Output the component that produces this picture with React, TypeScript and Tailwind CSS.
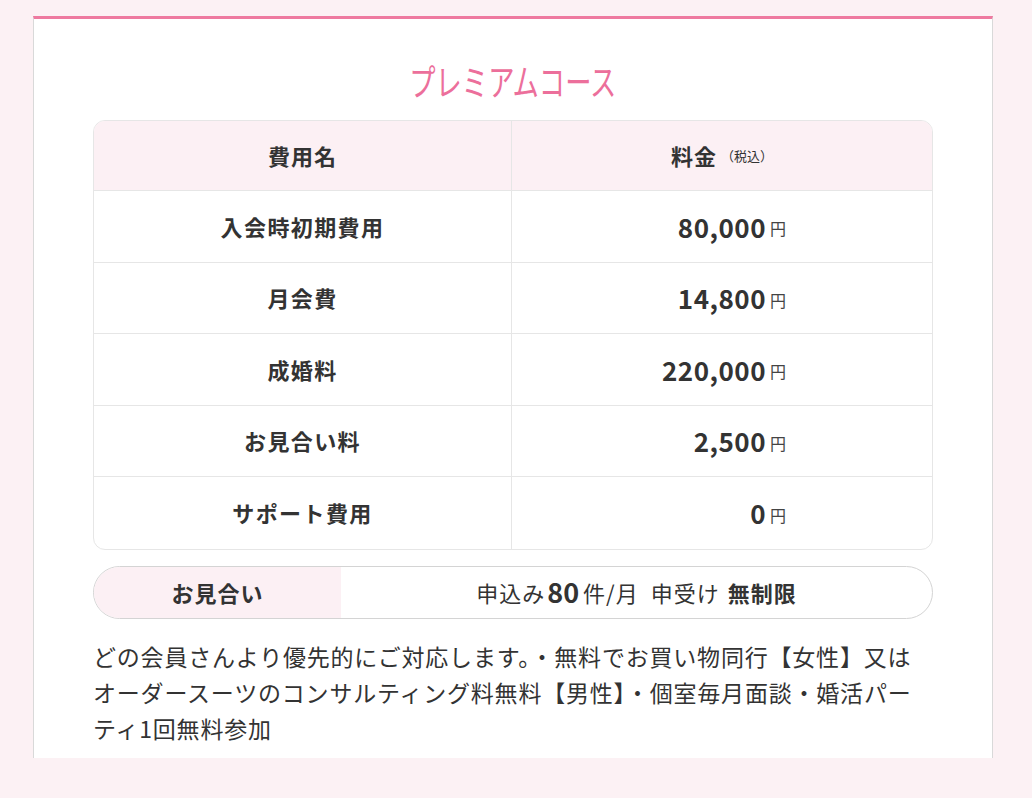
const JP = "font-['Noto_Sans_CJK_JP','Noto_Sans',sans-serif]";

const rows = [
  { name: "入会時初期費用", price: "80,000" },
  { name: "月会費", price: "14,800" },
  { name: "成婚料", price: "220,000" },
  { name: "お見合い料", price: "2,500" },
  { name: "サポート費用", price: "0" },
];

export default function App() {
  return (
    <div className={`min-h-screen bg-[#fcf1f4] pt-4 text-[#333] ${JP}`}>
      <div className="ml-[33px] mr-[39px] border-x border-t-[3px] border-x-[#d9d9d9] border-t-[#ee7aa0] bg-white px-[59px] pt-[41px] pb-3">
        <h2 className="text-center text-[36px] leading-[40px] font-normal text-[#ec6f9b]">
          <span className="inline-block scale-x-[0.73]">プレミアムコース</span>
        </h2>

        <div className="mt-5 overflow-hidden rounded-xl border border-[#e6e6e6]">
          <div className="grid h-[70px] grid-cols-[418px_1fr] bg-[#fcf0f4] border-b border-[#e6e6e6]">
            <div className="flex items-center justify-center border-r border-[#e6e6e6] text-[22px] font-bold tracking-[1px]">
              費用名
            </div>
            <div className="flex items-center justify-center text-[22px] font-bold tracking-[1px]">
              料金<span className="ml-1 text-[13px] font-normal tracking-normal">（税込）</span>
            </div>
          </div>
          {rows.map((r, i) => (
            <div
              key={r.name}
              className={`grid h-[71.5px] grid-cols-[418px_1fr] ${i < rows.length - 1 ? "border-b border-[#e6e6e6]" : ""}`}
            >
              <div className="flex items-center justify-center border-r border-[#e6e6e6] text-[22px] font-bold tracking-[1.4px]">
                {r.name}
              </div>
              <div className="flex items-center justify-end pr-[146px]">
                <span className="text-[26px] font-bold tracking-[0.5px]">{r.price}</span>
                <span className="ml-1 mt-1 text-[16px] text-[#444]">円</span>
              </div>
            </div>
          ))}
        </div>

        <div className="mt-[16px] flex h-[53px] overflow-hidden rounded-full border border-[#d4d4d4]">
          <div className="flex w-[247px] items-center justify-center bg-[#fcf0f4] text-[22px] font-bold tracking-[1px]">
            お見合い
          </div>
          <div className="flex flex-1 items-center justify-center text-[22px] tracking-[1px]">
            申込み<span className="ml-0.5 text-[27px] font-bold tracking-normal">80</span>
            <span className="ml-1">件/月</span>
            <span className="ml-3">申受け</span>
            <span className="ml-2 font-bold">無制限</span>
          </div>
        </div>

        <p className="mt-[19px] text-[23px] leading-[36px] tracking-[0.8px] text-[#333]">
          どの会員さんより優先的にご対応します。・無料でお買い物同行【女性】又はオーダースーツのコンサルティング料無料【男性】・個室毎月面談・婚活パーティ1回無料参加
        </p>
      </div>
    </div>
  );
}
